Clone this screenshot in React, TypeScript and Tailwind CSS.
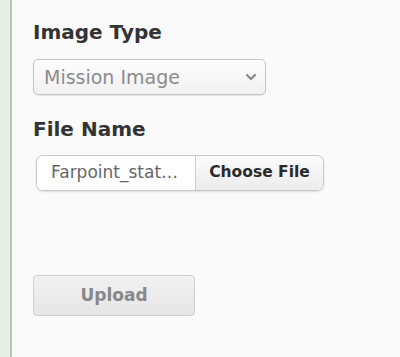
import { ChevronDown } from "lucide-react";

export default function App() {
  return (
    <div className="flex h-[357px] w-[400px] bg-[#fafafa] font-['DejaVu_Sans',sans-serif]">
      <div className="w-[12px] shrink-0 bg-[#e7eee3] border-r-2 border-[#b5cba8]" />
      <div className="flex flex-col pl-[21px] pt-[19px]">
        <h2 className="text-[20px] font-bold leading-[26px] text-[#333]">Image Type</h2>
        <div className="mt-[14px] flex h-[36px] w-[233px] items-center justify-between rounded-[5px] border border-[#c4c4c4] bg-gradient-to-b from-[#fdfdfd] to-[#f1f1f1] pl-[10px] pr-[6px] shadow-[0_1px_1px_rgba(0,0,0,0.08)]">
          <span className="text-[19px] text-[#8c8c8c]">Mission Image</span>
          <ChevronDown className="h-[16px] w-[16px] text-[#8a8a8a]" strokeWidth={3.5} />
        </div>

        <h2 className="mt-[21px] text-[20px] font-bold leading-[26px] text-[#333]">File Name</h2>
        <div className="ml-[3px] mt-[13px] flex h-[36px] w-[288px] overflow-hidden rounded-[7px] border border-[#c9c9c9] shadow-[0_1px_2px_rgba(0,0,0,0.12)]">
          <div className="flex w-[159px] items-center border-r border-[#cfcfcf] bg-white pl-[14px] text-[17px] text-[#666]">
            Farpoint_stat…
          </div>
          <div className="flex flex-1 items-center justify-center bg-gradient-to-b from-[#fbfbfb] to-[#ececec] text-[15.5px] font-bold text-[#2a2a2a]">
            Choose File
          </div>
        </div>

        <button
          type="button"
          className="mt-[84px] flex h-[41px] w-[162px] items-center justify-center rounded-[4px] border border-[#cfcfcf] bg-gradient-to-b from-[#f1f1f1] to-[#e6e6e6] text-[17px] font-bold text-[#888]"
        >
          Upload
        </button>
      </div>
    </div>
  );
}
